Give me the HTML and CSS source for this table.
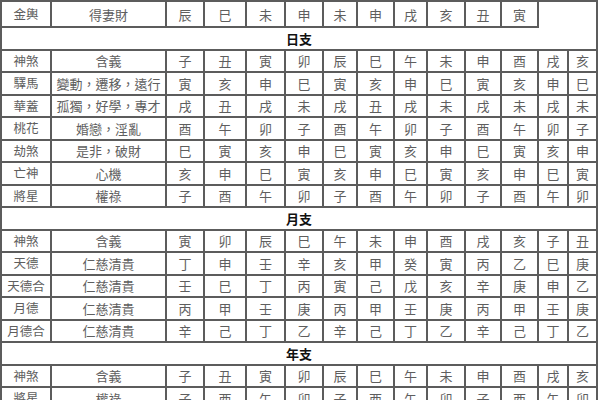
FILE: index.html
```html
<!DOCTYPE html>
<html lang="zh-Hant">
<head>
<meta charset="utf-8">
<title>神煞表</title>
<link rel="stylesheet" href="styles.css">
</head>
<body>
<div class="chart">
  <div class="c name">金輿</div><div class="c mean">得妻財</div>
  <div class="c">辰</div><div class="c">巳</div><div class="c">未</div><div class="c">申</div><div class="c">未</div><div class="c">申</div><div class="c">戌</div><div class="c">亥</div><div class="c">丑</div><div class="c">寅</div>
  <div class="c blank"></div>

  <div class="c head">日支</div>

  <div class="c name">神煞</div><div class="c mean">含義</div>
  <div class="c">子</div><div class="c">丑</div><div class="c">寅</div><div class="c">卯</div><div class="c">辰</div><div class="c">巳</div><div class="c">午</div><div class="c">未</div><div class="c">申</div><div class="c">酉</div><div class="c">戌</div><div class="c">亥</div>

  <div class="c name">驛馬</div><div class="c mean">變動，遷移，遠行</div>
  <div class="c">寅</div><div class="c">亥</div><div class="c">申</div><div class="c">巳</div><div class="c">寅</div><div class="c">亥</div><div class="c">申</div><div class="c">巳</div><div class="c">寅</div><div class="c">亥</div><div class="c">申</div><div class="c">巳</div>

  <div class="c name">華蓋</div><div class="c mean">孤獨，好學，專才</div>
  <div class="c">戌</div><div class="c">丑</div><div class="c">戌</div><div class="c">未</div><div class="c">戌</div><div class="c">丑</div><div class="c">戌</div><div class="c">未</div><div class="c">戌</div><div class="c">未</div><div class="c">戌</div><div class="c">未</div>

  <div class="c name">桃花</div><div class="c mean">婚戀，淫亂</div>
  <div class="c">酉</div><div class="c">午</div><div class="c">卯</div><div class="c">子</div><div class="c">酉</div><div class="c">午</div><div class="c">卯</div><div class="c">子</div><div class="c">酉</div><div class="c">午</div><div class="c">卯</div><div class="c">子</div>

  <div class="c name">劫煞</div><div class="c mean">是非，破財</div>
  <div class="c">巳</div><div class="c">寅</div><div class="c">亥</div><div class="c">申</div><div class="c">巳</div><div class="c">寅</div><div class="c">亥</div><div class="c">申</div><div class="c">巳</div><div class="c">寅</div><div class="c">亥</div><div class="c">申</div>

  <div class="c name">亡神</div><div class="c mean">心機</div>
  <div class="c">亥</div><div class="c">申</div><div class="c">巳</div><div class="c">寅</div><div class="c">亥</div><div class="c">申</div><div class="c">巳</div><div class="c">寅</div><div class="c">亥</div><div class="c">申</div><div class="c">巳</div><div class="c">寅</div>

  <div class="c name">將星</div><div class="c mean">權祿</div>
  <div class="c">子</div><div class="c">酉</div><div class="c">午</div><div class="c">卯</div><div class="c">子</div><div class="c">酉</div><div class="c">午</div><div class="c">卯</div><div class="c">子</div><div class="c">酉</div><div class="c">午</div><div class="c">卯</div>

  <div class="c head">月支</div>

  <div class="c name">神煞</div><div class="c mean">含義</div>
  <div class="c">寅</div><div class="c">卯</div><div class="c">辰</div><div class="c">巳</div><div class="c">午</div><div class="c">未</div><div class="c">申</div><div class="c">酉</div><div class="c">戌</div><div class="c">亥</div><div class="c">子</div><div class="c">丑</div>

  <div class="c name">天德</div><div class="c mean">仁慈清貴</div>
  <div class="c">丁</div><div class="c">申</div><div class="c">壬</div><div class="c">辛</div><div class="c">亥</div><div class="c">甲</div><div class="c">癸</div><div class="c">寅</div><div class="c">丙</div><div class="c">乙</div><div class="c">巳</div><div class="c">庚</div>

  <div class="c name">天德合</div><div class="c mean">仁慈清貴</div>
  <div class="c">壬</div><div class="c">巳</div><div class="c">丁</div><div class="c">丙</div><div class="c">寅</div><div class="c">己</div><div class="c">戊</div><div class="c">亥</div><div class="c">辛</div><div class="c">庚</div><div class="c">申</div><div class="c">乙</div>

  <div class="c name">月德</div><div class="c mean">仁慈清貴</div>
  <div class="c">丙</div><div class="c">甲</div><div class="c">壬</div><div class="c">庚</div><div class="c">丙</div><div class="c">甲</div><div class="c">壬</div><div class="c">庚</div><div class="c">丙</div><div class="c">甲</div><div class="c">壬</div><div class="c">庚</div>

  <div class="c name">月德合</div><div class="c mean">仁慈清貴</div>
  <div class="c">辛</div><div class="c">己</div><div class="c">丁</div><div class="c">乙</div><div class="c">辛</div><div class="c">己</div><div class="c">丁</div><div class="c">乙</div><div class="c">辛</div><div class="c">己</div><div class="c">丁</div><div class="c">乙</div>

  <div class="c head">年支</div>

  <div class="c name">神煞</div><div class="c mean">含義</div>
  <div class="c">子</div><div class="c">丑</div><div class="c">寅</div><div class="c">卯</div><div class="c">辰</div><div class="c">巳</div><div class="c">午</div><div class="c">未</div><div class="c">申</div><div class="c">酉</div><div class="c">戌</div><div class="c">亥</div>

  <div class="c name">將星</div><div class="c mean">權祿</div>
  <div class="c">子</div><div class="c">酉</div><div class="c">午</div><div class="c">卯</div><div class="c">子</div><div class="c">酉</div><div class="c">午</div><div class="c">卯</div><div class="c">子</div><div class="c">酉</div><div class="c">午</div><div class="c">卯</div>
</div>
</body>
</html>
```

FILE: styles.css
```css
html, body {
  margin: 0;
  padding: 0;
  background: #ffffff;
  overflow: hidden;
}

.chart {
  display: grid;
  grid-template-columns: 50px 115px 38px 42px 39px 38px 34px 37px 33px 38px 36px 37px 30px 29px;
  grid-template-rows: 26px;
  grid-auto-rows: 22.5px;
  width: max-content;
  border-left: 2px solid #5c5c5c;
  border-top: 2px solid #5c5c5c;
  font-family: "Noto Sans CJK TC", "Noto Sans CJK SC", sans-serif;
  font-size: 13px;
  color: #5e5e5e;
}

.c {
  box-sizing: border-box;
  display: flex;
  align-items: center;
  justify-content: center;
  border-right: 2px solid #5c5c5c;
  border-bottom: 2px solid #5c5c5c;
  white-space: nowrap;
  line-height: 1;
  overflow: hidden;
}

.name {
  font-size: 12.5px;
}

.blank {
  grid-column: span 2;
  border-bottom: none;
}

.head {
  grid-column: 1 / -1;
  font-weight: 700;
  color: #111;
  font-size: 13px;
}
```
